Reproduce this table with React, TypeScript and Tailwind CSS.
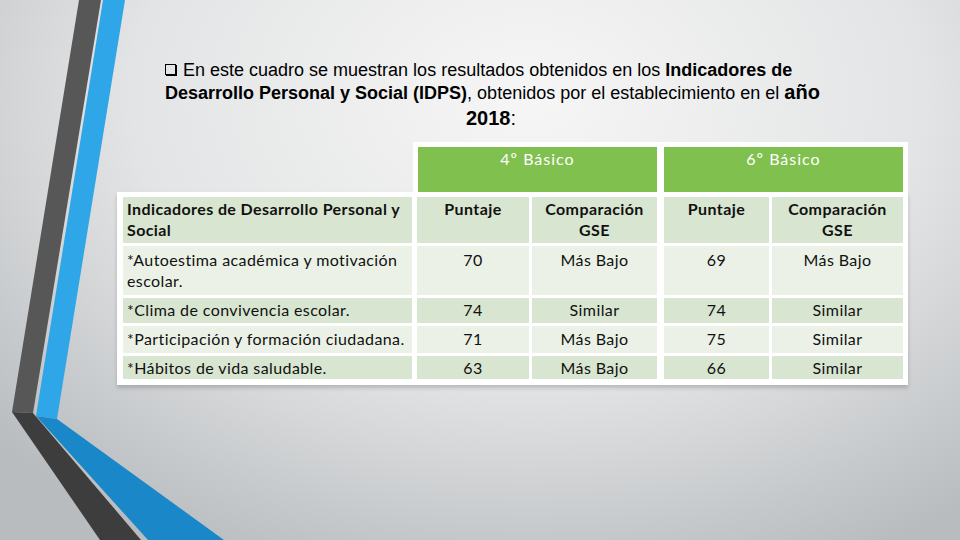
const rows = [
  { name: ['*Autoestima académica y motivación', 'escolar.'], a: '70', b: 'Más Bajo', c: '69', d: 'Más Bajo', h: 'h-[49px]', bg: 'bg-[#ebf1e6]', pt: 'pt-[3px]' },
  { name: ['*Clima de convivencia escolar.'], a: '74', b: 'Similar', c: '74', d: 'Similar', h: 'h-[25px]', bg: 'bg-[#d8e5d0]', pt: 'pt-[1px]' },
  { name: ['*Participación y formación ciudadana.'], a: '71', b: 'Más Bajo', c: '75', d: 'Similar', h: 'h-[27px]', bg: 'bg-[#ebf1e6]', pt: 'pt-[2px]' },
  { name: ['*Hábitos de vida saludable.'], a: '63', b: 'Más Bajo', c: '66', d: 'Similar', h: 'h-[23px]', bg: 'bg-[#d8e5d0]', pt: 'pt-[1px]' },
];

function Stripes() {
  return (
    <svg className="absolute inset-0 pointer-events-none" width="960" height="540" viewBox="0 0 960 540">
      <polygon points="79,0 101,0 33,413 12,412" fill="#575757" />
      <polygon points="12,412 33,413 141,540 100,540" fill="#3d3d3d" />
      <polygon points="103,0 125,0 57,419 36,416" fill="#2ea6e8" />
      <polygon points="36,416 57,419 224,540 148,540" fill="#1a87c9" />
    </svg>
  );
}

export default function App() {
  const cell = 'text-center leading-[21px]';
  return (
    <div className="relative w-[960px] h-[540px] overflow-hidden bg-[radial-gradient(ellipse_75%_95%_at_55%_18%,#f6f6f6_0%,#e3e4e5_55%,#b8bcbf_100%)]">
      <Stripes />
      <div className="relative">
        {/* Title */}
        <div className="pt-[59px] pl-[165px] font-['Liberation_Sans',Arial,sans-serif] text-[18px] leading-[22px] text-black">
          <div className="flex items-center">
            <span className="inline-block w-[11px] h-[11px] border border-black shadow-[1px_1px_0_#000] mr-[7px] mb-[1px]" />
            <span>
              En este cuadro se muestran los resultados obtenidos en los <b>Indicadores de</b>
            </span>
          </div>
          <div>
            <b>Desarrollo Personal y Social (IDPS)</b>, obtenidos por el establecimiento en el{' '}
            <b className="text-[20px]">año</b>
          </div>
        </div>
        <div className="w-[982px] text-center font-['Liberation_Sans',Arial,sans-serif] text-[20px] leading-[26px] text-black mt-[1px]">
          <b>2018</b>:
        </div>

        {/* Table */}
        <div className="mt-[11px] font-['Lato','Open_Sans',sans-serif] text-[16px] tracking-[0.4px] text-[#111]">
          <div className="ml-[413px] w-[495px] bg-white pt-[5px] px-[5px] flex gap-[7px]">
            <div className="w-[239px] h-[45px] bg-[#7fc04f] text-white text-center tracking-[1px] pt-[1px] leading-[21px]">
              4º Básico
            </div>
            <div className="w-[239px] h-[45px] bg-[#7fc04f] text-white text-center tracking-[1px] pt-[1px] leading-[21px]">
              6º Básico
            </div>
          </div>
          <div className="ml-[117px] w-[791px] bg-white pt-[5px] pl-[6px] pr-[5px] pb-[6px] shadow-[0_3px_4px_rgba(0,0,0,0.18)] grid grid-cols-[289px_114px_125px_109px_131px] gap-x-[3px] gap-y-[3px]">
            <div className="h-[46px] bg-[#d8e5d0] pl-[4px] pt-[1px] leading-[21px] font-bold">
              Indicadores de Desarrollo Personal y
              <br />
              Social
            </div>
            <div className={`ml-[2px] bg-[#d8e5d0] font-bold pt-[1px] ${cell}`}>Puntaje</div>
            <div className={`bg-[#d8e5d0] font-bold pt-[1px] ${cell}`}>
              Comparación
              <br />
              GSE
            </div>
            <div className={`ml-[4px] bg-[#d8e5d0] font-bold pt-[1px] ${cell}`}>Puntaje</div>
            <div className={`bg-[#d8e5d0] font-bold pt-[1px] ${cell}`}>
              Comparación
              <br />
              GSE
            </div>
            {rows.map((r) => (
              <>
                <div key={r.name[0]} className={`${r.h} ${r.bg} ${r.pt} pl-[4px] leading-[21px]`}>
                  {r.name.map((n, i) => (
                    <div key={i}>{n}</div>
                  ))}
                </div>
                <div className={`ml-[2px] ${r.bg} ${r.pt} ${cell}`}>{r.a}</div>
                <div className={`${r.bg} ${r.pt} ${cell}`}>{r.b}</div>
                <div className={`ml-[4px] ${r.bg} ${r.pt} ${cell}`}>{r.c}</div>
                <div className={`${r.bg} ${r.pt} ${cell}`}>{r.d}</div>
              </>
            ))}
          </div>
        </div>
      </div>
    </div>
  );
}
